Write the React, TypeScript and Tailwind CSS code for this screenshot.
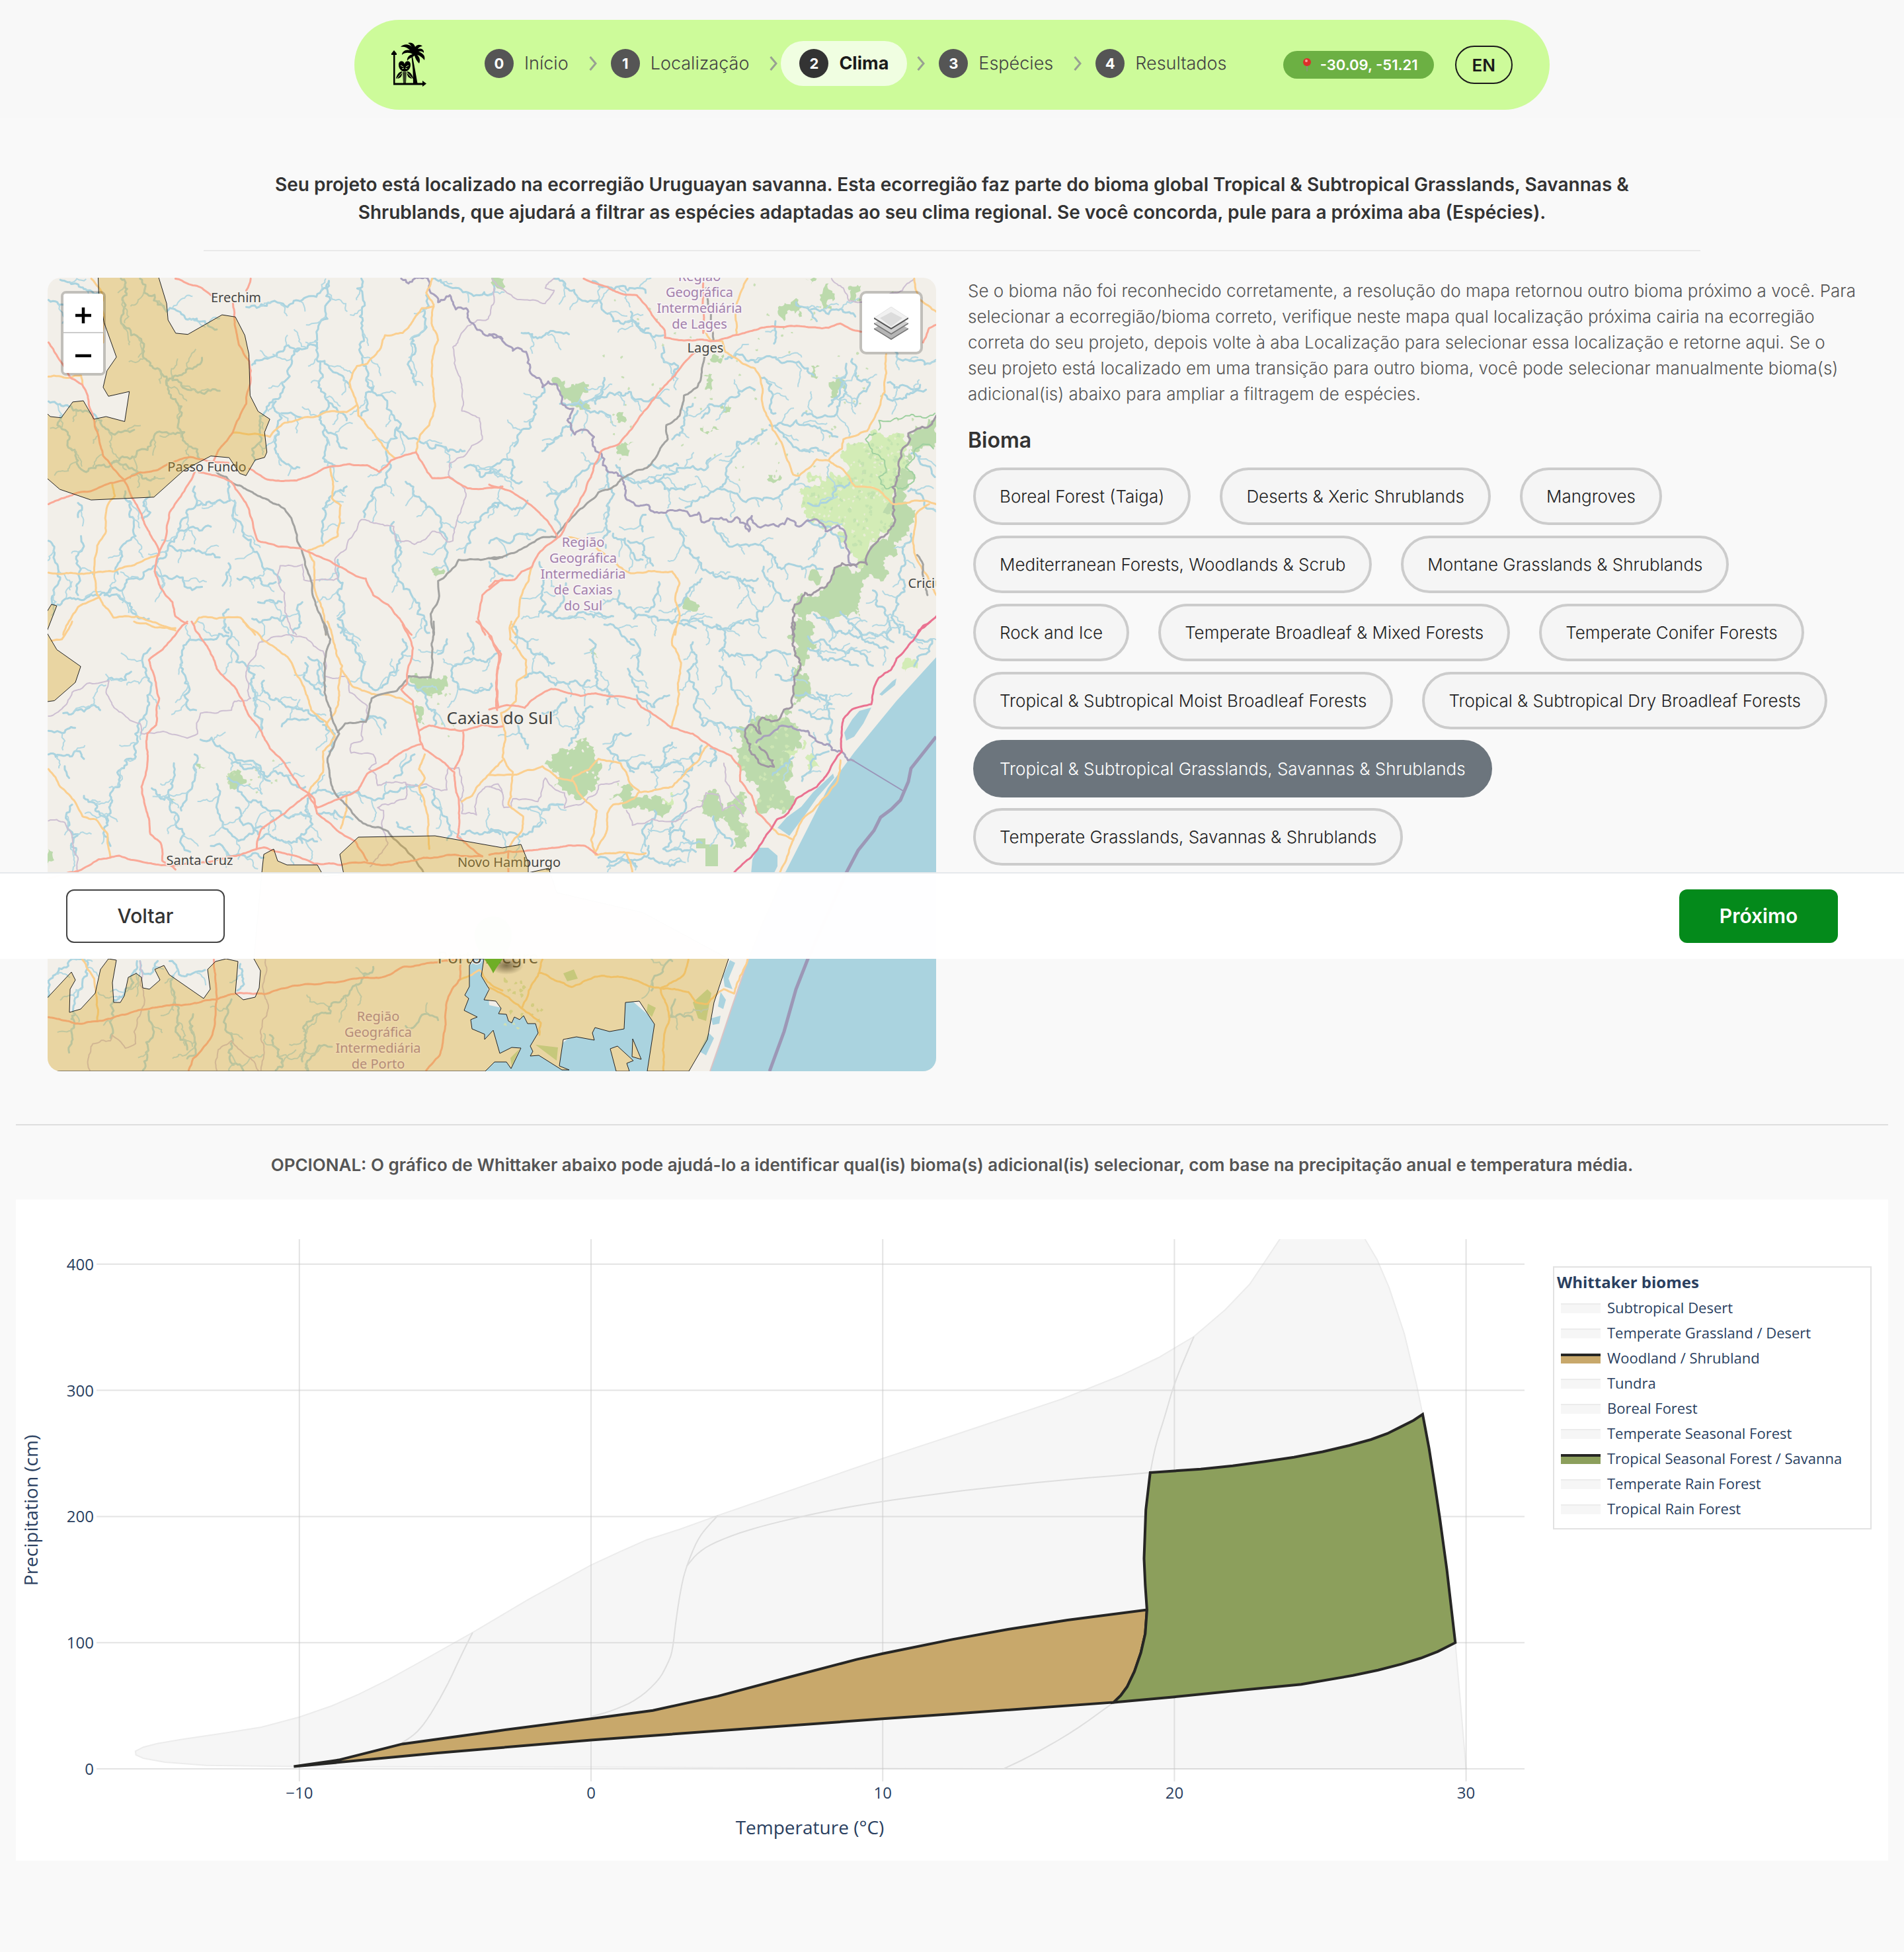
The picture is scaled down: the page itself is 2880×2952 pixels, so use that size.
import type { ReactNode } from 'react';

const steps = ['Início', 'Localização', 'Clima', 'Espécies', 'Resultados'];
const currentStep = 2;

const biomes = [
  'Boreal Forest (Taiga)',
  'Deserts & Xeric Shrublands',
  'Mangroves',
  'Mediterranean Forests, Woodlands & Scrub',
  'Montane Grasslands & Shrublands',
  'Rock and Ice',
  'Temperate Broadleaf & Mixed Forests',
  'Temperate Conifer Forests',
  'Tropical & Subtropical Moist Broadleaf Forests',
  'Tropical & Subtropical Dry Broadleaf Forests',
  'Tropical & Subtropical Grasslands, Savannas & Shrublands',
  'Temperate Grasslands, Savannas & Shrublands',
];
const selectedBiome = 'Tropical & Subtropical Grasslands, Savannas & Shrublands';

/* ---------- map ---------- */

type Point = [number, number];

// Each map tile has its own grid; lines are stored in tile units.
const tiles = {
  nw: { ox: -12, oy: -20, sx: 2.24, sy: 2.8 },
  ne: { ox: 668, oy: -20, sx: 2.24, sy: 2.8 },
  sw: { ox: -12, oy: 520, sx: 2.24, sy: 2.24 },
  se: { ox: 668, oy: 520, sx: 2.24, sy: 2.24 },
};
type Tile = keyof typeof tiles;

function toPoints(tile: Tile, data: string): Point[] {
  const { ox, oy, sx, sy } = tiles[tile];
  return data.split(' ').map((pair) => {
    const [x, y] = pair.split(',').map(Number);
    return [x / sx + ox, y / sy + oy];
  });
}

function seeded(seed: number) {
  let s = seed;
  return () => {
    s = (s * 16807) % 2147483647;
    return s / 2147483647 - 0.5;
  };
}

// Midpoint displacement, so that rivers and borders meander.
function roughen(points: Point[], amount: number, seed: number): Point[] {
  const rand = seeded(seed * 7919 + 13);
  let out = points;
  for (let pass = 0; pass < 5; pass++) {
    const next: Point[] = [out[0]];
    for (let i = 1; i < out.length; i++) {
      const [ax, ay] = out[i - 1];
      const [bx, by] = out[i];
      const len = Math.hypot(bx - ax, by - ay);
      if (len > 5) {
        const d = rand() * Math.min(len, 34) * amount;
        next.push([(ax + bx) / 2 - ((by - ay) / len) * d, (ay + by) / 2 + ((bx - ax) / len) * d]);
      }
      next.push([bx, by]);
    }
    out = next;
  }
  return out;
}

function toPath(points: Point[]) {
  return 'M' + points.map(([x, y]) => `${x.toFixed(1)} ${y.toFixed(1)}`).join('L');
}

function branches(points: Point[], seed: number) {
  const rand = seeded(seed * 104729 + 7);
  const out: string[] = [];
  for (let i = 5; i < points.length - 3; i += 10) {
    const [x, y] = points[i];
    const [px, py] = points[i - 4];
    const side = rand() > 0 ? 1 : -1;
    const angle = Math.atan2(y - py, x - px) + side * (0.8 + rand() * 0.7);
    const len = 14 + (rand() + 0.5) * 24;
    const mid: Point = [x + Math.cos(angle) * len * 0.5, y + Math.sin(angle) * len * 0.5];
    const end: Point = [mid[0] + Math.cos(angle + 0.5) * len * 0.6, mid[1] + Math.sin(angle + 0.5) * len * 0.6];
    out.push(toPath(roughen([[x, y], mid, end], 0.5, seed + i)));
  }
  return out;
}

// Small ragged patches spread over a box.
function speckles(x: number, y: number, w: number, h: number, count: number, size: number, seed: number) {
  const rand = seeded(seed * 3571 + 11);
  for (let i = 0; i < 4; i++) rand();
  let d = '';
  for (let i = 0; i < count; i++) {
    const cx = x + (rand() + 0.5) * w;
    const cy = y + (rand() + 0.5) * h;
    const corners: Point[] = [];
    for (let k = 0; k < 7; k++) {
      const r = size * (0.4 + (rand() + 0.5));
      corners.push([cx + Math.cos(k * 0.9) * r, cy + Math.sin(k * 0.9) * r]);
    }
    d += toPath(corners) + 'Z';
  }
  return d;
}

const rivers: [Tile, string][] = [
  ['nw', '275,60 280,150 275,240 310,300 350,360 370,410 410,450 430,510 460,570 480,640 490,710 505,770 540,820'],
  ['nw', '340,60 355,120 400,170 430,200 480,210 520,230 560,240 600,275'],
  ['nw', '430,510 460,470 510,440 550,395'],
  ['nw', '450,490 500,530 550,545 610,535'],
  ['nw', '490,710 430,710 380,745 330,790 270,830 240,850'],
  ['nw', '70,640 60,680 95,710 105,780 130,830 150,875 200,850 260,830 320,870 390,900'],
  ['nw', '30,580 80,600 130,620 190,640 220,690 260,715 320,700'],
  ['nw', '30,150 60,160 80,170'],
  ['nw', '70,65 120,80 160,110 200,120'],
  ['nw', '700,180 770,175 840,180 890,150 950,120 980,70'],
  ['nw', '980,70 985,150 975,230 940,310 940,370 950,430 945,500 970,570 950,640 965,700 970,770 960,820 1000,850'],
  ['nw', '940,350 880,355 830,350 790,390 720,425'],
  ['nw', '880,360 850,430 820,500 800,570 760,630 745,700 720,780 730,830'],
  ['nw', '800,580 820,650 810,720 800,790 830,840 880,860'],
  ['nw', '1090,60 1095,140 1085,220 1095,300 1090,380 1110,450 1130,520 1170,570 1200,640 1210,700 1280,740 1330,780 1440,790'],
  ['nw', '1130,520 1110,580 1090,640'],
  ['nw', '1210,690 1180,760 1190,850 1170,920 1130,990 1100,1070'],
  ['nw', '1240,920 1270,980 1310,1030 1360,1080 1375,1150 1380,1230 1385,1300'],
  ['nw', '1310,130 1300,220 1285,300 1270,380 1260,450 1275,510'],
  ['nw', '1330,60 1380,90 1420,100 1490,130 1540,90'],
  ['nw', '950,410 990,450 1030,490 1050,520'],
  ['nw', '970,700 1010,740 1040,780'],
  ['nw', '820,630 860,635 890,650'],
  ['nw', '980,585 1010,620 1040,660'],
  ['nw', '525,940 530,1020 500,1070 470,1120 440,1180 430,1230 400,1250 370,1290 310,1330 270,1380 220,1400'],
  ['nw', '640,920 645,1000 590,1010 535,1020'],
  ['nw', '660,1000 665,1080 690,1150 720,1200 745,1240 760,1290 810,1350'],
  ['nw', '470,1120 520,1110 580,1110'],
  ['nw', '440,1190 500,1210 560,1220 610,1240'],
  ['nw', '390,1300 430,1320 490,1350 550,1365'],
  ['nw', '290,960 310,1010 320,1080 325,1150 280,1190 270,1260 265,1310'],
  ['nw', '370,960 375,1050 350,1080'],
  ['nw', '130,1010 130,1070'],
  ['nw', '140,1150 130,1230 135,1300 130,1400'],
  ['nw', '30,1170 50,1230 60,1310 50,1370 50,1440'],
  ['nw', '220,1400 280,1420 310,1470 370,1500'],
  ['nw', '60,1440 110,1415 160,1410 220,1390'],
  ['nw', '640,1265 635,1320 620,1360'],
  ['nw', '670,1330 730,1325 800,1345'],
  ['nw', '960,1180 960,1100 970,1010 1010,960 1040,940'],
  ['nw', '1010,1250 1010,1330 1015,1420 1010,1500 1020,1560'],
  ['nw', '1210,1170 1210,1260 1215,1340 1260,1400 1280,1480 1320,1560'],
  ['nw', '1565,1010 1500,1060 1460,1130 1440,1220'],
  ['nw', '1200,1090 1210,1180 1215,1240'],
  ['nw', '740,1430 780,1420 820,1430'],
  ['nw', '720,1500 770,1505 840,1490'],
  ['nw', '890,1430 880,1500 860,1560'],
  ['nw', '640,1460 625,1510 640,1560'],
  ['nw', '1440,860 1500,900 1560,870'],
  ['ne', '220,60 260,100 300,140 370,150 390,200 420,240 490,240 540,270'],
  ['ne', '110,290 150,310 200,290 270,295'],
  ['ne', '185,520 150,580 150,650 110,700 85,770'],
  ['ne', '300,620 250,690 220,740 180,790'],
  ['ne', '240,590 320,610 370,630 410,640'],
  ['ne', '320,590 380,560 440,540 480,540 540,580 610,600'],
  ['ne', '390,480 385,540 360,590'],
  ['ne', '380,820 330,870 290,910 245,960 230,1050 240,1100'],
  ['ne', '400,870 400,920 415,990 405,1060 410,1130 395,1200'],
  ['ne', '430,850 470,900 520,920 590,930 640,950 675,935'],
  ['ne', '540,850 590,850 640,850'],
  ['ne', '550,900 610,890 670,860 740,850 750,820'],
  ['ne', '900,530 840,560 800,590 740,600 720,650'],
  ['ne', '620,740 650,690 670,640 690,590'],
  ['ne', '590,350 610,420 640,430 620,480'],
  ['ne', '800,400 870,405 930,395 1010,410 1080,440 1100,470'],
  ['ne', '920,480 960,560 950,610 970,630'],
  ['ne', '1210,420 1190,490 1200,560 1180,620 1110,650 1060,640'],
  ['ne', '1230,400 1240,470 1290,500 1250,560 1240,600'],
  ['ne', '1150,600 1180,560 1200,500'],
  ['ne', '950,680 1010,680 1070,680 1120,690 1180,730'],
  ['ne', '970,690 1010,740 1060,790 1150,800'],
  ['ne', '940,700 900,740 840,750 850,790 810,850 810,900 780,950'],
  ['ne', '780,950 840,970 910,990 970,990 1010,950 1050,900'],
  ['ne', '780,950 740,980 690,1000 665,1030'],
  ['ne', '600,1060 640,1120 660,1190 710,1240 740,1300 800,1330 850,1340 910,1330'],
  ['ne', '760,1090 790,1160 850,1190 930,1200 970,1240 990,1290 1060,1290 1130,1290'],
  ['ne', '930,1280 950,1340 980,1390 1020,1420'],
  ['ne', '850,1330 880,1360 900,1390'],
  ['ne', '530,1060 520,1130'],
  ['ne', '420,1140 460,1160 480,1220 520,1250'],
  ['ne', '470,1170 520,1230 555,1275'],
  ['ne', '130,1000 60,1020 0,1030'],
  ['ne', '110,920 75,910 80,840 0,880'],
  ['ne', '0,1180 70,1180 130,1140 190,1130'],
  ['ne', '260,950 220,970 195,980'],
  ['ne', '720,1330 680,1370 650,1440 630,1470'],
  ['ne', '575,1345 560,1410 530,1470'],
  ['ne', '170,1260 190,1330 180,1400 170,1470 250,1500 330,1480 420,1490'],
  ['ne', '260,1350 250,1430 200,1490'],
  ['ne', '440,1380 440,1440 490,1500 560,1490 620,1520 700,1540'],
  ['ne', '0,1260 40,1310 80,1320'],
  ['ne', '1080,1080 1130,1110 1180,1150 1200,1200'],
  ['ne', '1140,1140 1110,1190 1100,1230'],
  ['ne', '1080,1010 1150,1000 1170,940 1230,920'],
  ['ne', '1340,550 1400,570 1440,540 1480,530'],
  ['ne', '1350,500 1400,510 1460,510'],
  ['ne', '1330,340 1380,390 1440,410 1510,410'],
  ['ne', '1430,800 1470,850 1510,900'],
  ['ne', '1420,960 1460,970 1510,1040'],
  ['ne', '1430,1140 1400,1200 1410,1260 1390,1320 1390,1400 1370,1470 1390,1560'],
  ['ne', '1300,1380 1310,1440 1350,1490 1350,1560'],
  ['ne', '1100,1480 1150,1520 1180,1560'],
  ['ne', '1190,1470 1220,1520 1260,1560'],
  ['ne', '1090,190 1150,210 1240,220'],
  ['ne', '1040,160 1090,200 1110,240'],
  ['ne', '970,240 970,300 965,335'],
  ['ne', '350,70 420,110 470,110 530,120'],
  ['ne', '480,200 500,260 530,290 590,300'],
  ['ne', '650,1510 700,1500 740,1530 800,1540 860,1520 910,1510 930,1450'],
  ['sw', '640,20 660,100 700,150 720,220 730,300 750,370'],
  ['sw', '640,50 580,60 500,70 480,130 495,190 490,250 530,300'],
  ['sw', '375,90 360,160 365,250 350,330 330,400 290,470 270,560 240,640 230,690 240,760'],
  ['sw', '310,170 260,195 230,200'],
  ['sw', '545,400 610,420 660,460 730,480 780,520 850,545 900,560'],
  ['sw', '650,480 700,500 780,540'],
  ['sw', '640,530 690,590 750,610 810,640 860,660 910,660'],
  ['sw', '600,550 600,620 620,690 660,730 720,720 760,700'],
  ['sw', '665,630 690,690 740,720'],
  ['sw', '455,480 450,560 435,600 470,660 490,720 510,780'],
  ['sw', '525,450 530,510 500,580 480,640'],
  ['sw', '380,565 410,600 450,610'],
  ['sw', '85,490 100,530'],
  ['sw', '30,370 70,375 120,360'],
  ['sw', '30,450 80,455 150,465'],
  ['sw', '150,590 190,620 230,680'],
  ['sw', '80,310 130,300 205,300'],
  ['sw', '110,620 100,680 130,720 120,790'],
  ['sw', '760,200 800,260 850,290 910,300 960,340'],
  ['sw', '900,140 930,220 960,250'],
  ['sw', '910,120 950,160 970,220'],
  ['sw', '820,355 870,330 910,330'],
  ['sw', '1010,10 1040,60 1080,110 1090,180 1130,230 1180,200 1220,140 1230,60'],
  ['sw', '1560,100 1480,130 1410,150 1400,200 1440,230 1530,210'],
  ['sw', '1450,40 1470,110'],
  ['sw', '1380,60 1350,110'],
  ['sw', '1240,200 1300,240 1340,300 1340,350'],
  ['sw', '910,590 960,570 1010,590 1100,590 1180,580 1240,560 1310,560'],
  ['sw', '920,590 900,640 910,700 890,750'],
  ['sw', '940,650 1000,640 1060,670'],
  ['sw', '960,350 1000,380 980,440'],
  ['sw', '1090,330 1130,320 1170,360'],
  ['sw', '1200,530 1240,480 1270,450'],
  ['sw', '1330,570 1360,640 1390,690 1380,740'],
  ['sw', '1210,680 1255,695'],
  ['sw', '1560,720 1500,720 1430,720'],
  ['sw', '580,760 640,790 700,800 760,800'],
  ['sw', '740,740 820,740 880,730 940,745'],
  ['sw', '30,1270 60,1190 100,1150 160,1150 160,1200 130,1260 120,1330 110,1400 100,1460'],
  ['sw', '330,1150 310,1200 270,1270 250,1340 240,1410'],
  ['sw', '340,1150 340,1180 380,1190 400,1150'],
  ['sw', '440,1150 480,1200 560,1180'],
  ['sw', '680,1160 690,1210 670,1250'],
  ['sw', '370,1320 385,1400 360,1460 350,1520'],
  ['sw', '450,1200 460,1300 470,1400 500,1450'],
  ['sw', '520,1330 525,1410 500,1480'],
  ['sw', '650,1280 630,1340 650,1400 640,1460 690,1520'],
  ['sw', '1130,1170 1080,1230 1010,1290 940,1330 900,1400 890,1490'],
  ['sw', '1350,1350 1290,1340 1240,1370'],
  ['sw', '990,1440 940,1450 910,1520'],
  ['sw', '800,1520 810,1450 780,1400'],
  ['se', '80,10 130,70 180,110 220,140'],
  ['se', '480,60 500,120 520,180'],
  ['se', '340,60 350,120 360,170 400,230 400,280'],
  ['se', '120,190 200,190 260,210 340,200'],
  ['se', '390,10 450,50 490,80'],
  ['se', '770,10 800,50 780,100 850,110 910,130 980,100 1020,110'],
  ['se', '690,70 690,150 700,230 700,300 720,350 800,360 870,360'],
  ['se', '780,150 820,220 860,280 880,340'],
  ['se', '500,250 560,290 610,250'],
  ['se', '470,160 490,210 540,250'],
  ['se', '260,260 230,300 180,310'],
  ['se', '290,290 320,330 350,290'],
  ['se', '320,330 300,380 270,420'],
  ['se', '110,330 110,390 130,430'],
  ['se', '480,380 420,400 400,430 470,470 490,510'],
  ['se', '470,480 540,480 600,490 650,480'],
  ['se', '550,510 590,440 620,410'],
  ['se', '720,420 680,460 650,530'],
  ['se', '750,430 770,460 750,490'],
  ['se', '660,540 670,590 650,650 610,710 590,770'],
  ['se', '610,720 660,710 720,750'],
  ['se', '560,640 530,690 530,760'],
  ['se', '100,630 180,640 250,620'],
  ['se', '0,715 80,715 130,720 180,680'],
  ['se', '370,800 430,810 520,800 540,760'],
  ['se', '400,830 460,810 500,830'],
  ['se', '540,800 600,820 650,810'],
  ['se', '590,770 640,770 700,780'],
  ['se', '760,660 790,720 820,760'],
  ['se', '1080,50 1140,70 1200,100 1260,110 1300,150'],
  ['se', '1150,10 1220,30 1300,70 1350,90'],
  ['se', '1230,10 1300,40 1370,70'],
  ['se', '1390,10 1440,50 1500,60'],
  ['se', '1080,90 1130,130 1200,130 1250,150'],
  ['se', '1040,250 1100,260 1150,300 1160,370 1150,420'],
  ['se', '1110,240 1160,280'],
  ['se', '1050,300 1110,330 1150,330'],
  ['se', '970,180 1000,200 1030,160'],
  ['se', '1030,460 1000,490 960,520'],
  ['se', '1060,540 1090,500 1110,450 1150,440'],
  ['se', '1500,60 1480,110 1440,150'],
  ['se', '620,1150 560,1200 550,1250'],
  ['se', '630,1280 610,1340 690,1350'],
];

const trunkRoads: [Tile, string][] = [
  ['nw', '460,60 500,80 550,100 580,130'],
  ['nw', '715,60 700,110'],
  ['nw', '655,165 660,230 675,340 710,410 715,490 700,590 655,710 610,780 590,830'],
  ['nw', '30,330 60,390 105,480 145,510 180,640 200,730 215,810 285,910 320,1000 350,1080 405,1220'],
  ['nw', '30,1015 120,970 200,945 285,915 340,880 400,870 440,840 510,815 590,835 640,840'],
  ['nw', '525,880 490,960 440,1050 430,1140 405,1220 390,1300 410,1370 450,1430 460,1490 500,1520'],
  ['nw', '540,880 600,895 650,920 710,1040 730,1140 740,1170 810,1195 890,1205 1000,1270 1060,1310 1105,1330 1130,1400 1180,1440 1220,1500 1260,1568'],
  ['nw', '710,865 770,910 870,915 960,865 1050,845 1110,850 1150,878 1190,830 1275,795 1330,905 1385,900 1450,948 1568,940'],
  ['nw', '1568,1330 1500,1400 1485,1500 1510,1568'],
  ['ne', '0,932 60,955 130,1010 200,1090 230,1150'],
  ['ne', '320,60 400,95 440,120 500,130 540,190 595,280 595,310 660,322 750,325 850,295 960,262 1060,262 1150,268 1190,250 1260,285'],
  ['ne', '1470,330 1490,270 1515,255'],
  ['ne', '725,80 725,290'],
  ['ne', '700,370 640,450 540,600 480,700 440,760 380,790 345,900 300,1020 240,1150 170,1220 145,1280 110,1300 85,1335 20,1340 0,1365'],
  ['sw', '500,0 470,30 430,80 370,130 390,190 405,260 395,350 365,380 365,480 345,560 365,650 375,720 410,750 415,810 460,840'],
  ['sw', '515,0 550,60 580,110 600,160 660,220 690,270 710,320 750,370 780,430 830,480 880,560 930,600 940,650 1000,700 1070,745 1110,810'],
  ['sw', '30,870 130,845 200,805 270,793 350,815 420,825 530,820 650,795 760,765 850,790 930,820 1020,825 1100,815 1190,825 1300,800 1400,790 1500,795'],
  ['sw', '735,770 750,705 830,650 910,585 940,630 1000,605 1080,570 1110,515 1180,480 1230,440 1295,415'],
  ['sw', '1230,10 1265,90 1250,150 1245,210 1225,230 1265,270 1285,380 1300,430 1360,470 1405,510 1420,600 1415,730 1500,795'],
  ['sw', '1285,370 1320,352 1430,370 1500,350 1568,355'],
  ['sw', '1435,375 1430,450 1405,500'],
  ['sw', '1480,0 1530,50 1555,110 1550,300'],
  ['sw', '30,1340 120,1362 240,1345 350,1315 480,1300 600,1280 650,1262 760,1262 900,1228 1060,1210 1160,1205 1230,1170 1340,1155 1430,1145'],
  ['sw', '590,1145 600,1280 585,1400 520,1480 505,1520'],
  ['sw', '1425,1145 1425,1210 1385,1270 1375,1350 1355,1470 1310,1520'],
  ['se', '0,50 40,110 25,180 30,290'],
  ['se', '0,298 60,283 120,292 160,255 210,228 310,252 360,243 500,265 515,290 620,360 690,380 740,415 820,455 850,490 850,540 890,590 910,650 955,695'],
  ['se', '0,790 65,778 180,770 270,758 325,760 365,788'],
  ['se', '65,780 65,850'],
];

const motorways: [Tile, string][] = [
  ['ne', '1515,1490 1470,1530 1450,1568'],
  ['se', '1495,0 1455,30 1410,95 1380,125 1360,165 1320,190 1305,220 1295,280 1230,297 1200,330 1195,440 1150,510 1110,560 1040,600 1000,660 975,670 935,730 910,770 860,820 830,850'],
];

const primaryRoads: [Tile, string][] = [
  ['nw', '175,60 215,140 215,330'],
  ['nw', '30,475 100,480 140,470 145,510'],
  ['nw', '1330,60 1310,120 1335,170 1330,260 1350,320 1330,430 1340,600 1320,680 1290,720 1275,795'],
  ['nw', '1335,178 1295,185 1230,290 1170,300 1140,380 1110,420 1075,430 1050,500 1075,590 1080,640 1140,730 1205,820'],
  ['nw', '1075,595 1040,625 960,630 890,650 830,670 780,730 740,718 655,712'],
  ['nw', '985,865 995,940 990,990 1020,1020 1010,1150 960,1190 910,1210 930,1260 930,1350 950,1430 970,1568'],
  ['nw', '30,1305 150,1310 250,1300 330,1265 405,1230'],
  ['nw', '245,925 255,980 230,1020 225,1130 195,1190 185,1300 190,1380 250,1495 330,1490 400,1520 460,1540'],
  ['nw', '200,1410 130,1450 90,1530 80,1568'],
  ['nw', '525,1520 540,1495 600,1500 680,1495 730,1568'],
  ['ne', '875,60 840,160 838,295'],
  ['ne', '730,280 750,320 790,325 800,370 850,410 900,440 920,490 925,550 940,640 960,700 1000,790 1030,890 1050,895 1110,825 1150,830 1195,780 1200,740 1280,705 1320,610 1340,540 1345,380'],
  ['ne', '1150,830 1190,860 1240,940 1320,955 1370,1015 1440,1000 1515,1015'],
  ['ne', '1490,1015 1445,1060 1440,1220 1480,1310 1515,1400'],
  ['ne', '1440,60 1460,150 1515,200'],
  ['ne', '270,1155 330,1160 370,1210 440,1280 480,1308 560,1298 620,1300 645,1350 630,1420 645,1480 630,1568'],
  ['ne', '145,1280 110,1400 100,1490 75,1540 90,1568'],
  ['sw', '30,500 70,560 110,600 145,660 190,670 230,720 240,800'],
  ['sw', '320,0 400,20 460,30'],
  ['sw', '40,65 75,60 110,0'],
  ['sw', '690,0 760,65 840,120 870,180 920,300 970,340 1000,390 960,440 960,510 920,560 910,585'],
  ['sw', '975,0 1000,80 1025,150 1015,250 1000,310 970,350'],
  ['sw', '1020,160 1060,220 1125,245 1190,250 1260,280'],
  ['sw', '1305,450 1285,500 1305,530 1285,560 1310,640 1320,770'],
  ['sw', '1568,470 1500,540 1465,590 1430,610'],
  ['sw', '1040,590 1040,640 1020,700'],
  ['sw', '145,1145 185,1210 195,1350'],
  ['sw', '1420,1215 1490,1180 1530,1230 1568,1250'],
  ['se', '75,0 70,60 125,130 125,180 95,200 90,270 40,310 55,400 45,460 80,510 65,620 115,660 110,710 70,760'],
  ['se', '640,0 620,80 650,140 640,280 615,360'],
  ['se', '740,420 710,470 660,520 620,560 510,578 475,545 445,480 370,465 340,500 285,525 280,540 230,530 180,490 80,520 0,520'],
  ['se', '285,540 320,600 365,640 345,740 360,790 470,783 530,785'],
  ['se', '505,580 490,600 420,620 400,650 400,700 360,780'],
  ['se', '465,785 485,850'],
  ['se', '1190,470 1180,540 1130,600 1070,660 1030,740 985,850'],
  ['se', '960,700 980,720 1030,740'],
  ['se', '875,1145 850,1200 830,1260 795,1245 740,1295 700,1290 675,1255 580,1242 480,1210 390,1200 330,1215 280,1238 170,1190'],
  ['se', '675,1145 660,1195 580,1242 610,1350 590,1430 590,1520'],
  ['se', '180,1145 165,1200 130,1270 110,1310'],
  ['se', '0,1240 60,1270 110,1310 175,1360 170,1400'],
];

const railways: [Tile, string][] = [
  ['nw', '600,880 660,930 740,980 830,1035 865,1120 890,1220 915,1320 925,1400 950,1480 970,1568'],
  ['nw', '1568,1240 1420,1250 1390,1300 1350,1340 1345,1440 1325,1480 1335,1568'],
  ['ne', '735,100 760,320'],
  ['ne', '730,390 705,520 660,555 645,640 600,680 605,740 545,850 445,910 430,935 370,965 290,1060 225,1155 170,1160 100,1210 30,1245 0,1245'],
  ['ne', '1450,1230 1470,1270 1485,1400'],
  ['sw', '960,0 985,60 970,110 965,240 1000,350 1015,380 975,470 1000,580 1060,650 1110,690 1180,710 1240,770 1280,820 1300,850'],
  ['sw', '1335,0 1330,100 1325,190 1250,185 1210,235 1125,260 1105,340 1035,345 1010,375'],
];

const stateBorder: [Tile, string][] = [
  ['nw', '1225,60 1250,80 1270,60 1315,60 1325,120 1350,160 1390,130 1410,190 1445,185 1460,245 1510,300 1568,315'],
  ['ne', '0,295 50,330 80,365 125,370 140,460 180,520 200,495 240,540 245,580 285,610 265,660 290,720 320,700 355,730 360,790 380,800 385,850 430,880 455,930 495,1020 520,1020 560,1050 620,1040 680,1065 710,1050 720,1090 750,1075 820,1090 840,1070 870,1100 880,1130 890,1065 910,1110 980,1110 1010,1075 1050,1110 1110,1080 1140,1130 1180,1105 1210,1150 1210,1200 1245,1280'],
  ['se', '905,410 950,385 1025,355 1080,370 1120,410 1160,435 1200,445 1215,470 1235,472'],
];

const escarpment: [Tile, string][] = [
  ['ne', '1515,640 1485,690 1420,715 1395,800 1380,900 1370,990 1360,1120 1310,1180 1280,1270 1170,1285 1135,1370 1090,1400 1070,1390 1035,1440 1028,1568'],
  ['se', '1030,0 1035,100 1055,150 1030,230 1025,290 975,335 925,325 920,380 880,350 870,395 885,440 940,490 965,492 915,425'],
];

const regionBorders: [Tile, string][] = [
  ['nw', '1540,100 1540,160 1520,230 1450,260 1400,350 1410,440 1430,520 1430,620 1490,650 1500,740 1440,810 1390,840 1385,890 1440,950 1430,1030 1400,1170 1380,1175 1360,1140 1330,1130 1310,1160 1270,1185 1210,1170 1200,1110 1140,1095 1090,1080 1060,1150 1000,1250 1010,1330 895,1335 890,1270 815,1275 805,1320 830,1390 840,1500 870,1568'],
  ['ne', '1160,60 1200,100 1220,155 1300,160 1350,130 1400,110 1440,60'],
  ['ne', '10,60 60,120 120,150 190,165 220,110 190,100 220,60'],
  ['sw', '30,320 80,290 110,240 160,210 235,200 225,240 280,310 340,345 345,380 430,375 500,395 535,380 545,310 650,300 660,270 715,260 705,150 745,70 810,50 880,50 960,100 965,180'],
  ['sw', '965,185 1040,185 1050,240 1110,285 1095,400 1055,415 1055,445 1130,450 1140,480 1115,500 1140,520 1145,555 1240,545 1240,600 1160,620 1145,630 1165,640 1165,710 1180,750 1120,830'],
  ['sw', '1240,550 1310,550 1380,570 1385,495 1420,495 1435,560 1430,650 1480,655 1480,600 1510,560 1568,580'],
  ['sw', '30,675 85,680 110,730 130,800 130,848'],
  ['sw', '340,1150 340,1230 355,1290 330,1350 325,1430 290,1445 245,1400 240,1420 180,1430 170,1520'],
  ['sw', '765,1145 760,1220 775,1310 755,1350 760,1440 750,1520'],
  ['sw', '600,1520 605,1450 650,1420 700,1470 740,1520'],
  ['se', '0,560 30,550 50,630 75,630 80,600 165,610 190,530 225,570 255,580 255,632 310,620 365,580 370,555 440,540'],
  ['se', '465,640 485,690 550,670 650,668 660,650 720,625 735,580 780,590 790,640 830,620 860,660'],
  ['se', '795,480 800,540 830,590 860,620'],
];

const parkBorders: [Tile, string][] = [
  ['ne', '1320,700 1320,660 1380,650 1430,635 1480,650 1510,630'],
  ['ne', '1310,715 1275,740 1300,800 1340,830 1345,880 1320,900 1345,950 1400,950 1440,910 1410,860 1440,790 1470,760 1505,780'],
];

const forests: [Tile, string][] = [
  ['ne', '1515,640 1480,690 1420,715 1395,800 1385,900 1370,990 1360,1120 1310,1180 1280,1270 1170,1285 1135,1370 1090,1400 1060,1390 1035,1440 1028,1568 1090,1568 1090,1480 1160,1500 1240,1440 1260,1500 1260,1370 1340,1330 1370,1240 1420,1150 1430,1030 1400,960 1440,890 1410,830 1470,770 1515,740'],
  ['se', '1030,0 1035,100 1055,150 1030,230 1025,290 975,335 925,325 880,350 835,370 860,410 820,430 840,480 870,540 910,600 930,650 990,650 1020,590 1000,540 1030,490 990,440 1060,420 1060,390 1020,340 1060,260 1080,200 1070,140 1110,90 1090,0'],
  ['se', '210,450 290,405 355,425 360,470 375,530 360,570 320,595 270,590 220,560 215,510'],
  ['se', '405,600 430,545 475,550 480,590'],
  ['se', '450,625 500,595 570,590 615,620 600,650 540,645 480,635'],
  ['se', '720,650 740,575 780,590 790,640 830,600 870,580 870,640 850,680 880,730 870,765 825,770 810,690 800,660 770,680 740,660'],
  ['ne', '210,490 240,485 320,495 310,560 345,610 290,600 245,560 240,520'],
  ['ne', '430,640 455,625 460,670 435,670'],
  ['ne', '430,795 460,750 490,750 450,810'],
  ['ne', '980,190 1050,170 1060,220 1000,240 985,220'],
  ['ne', '1120,150 1150,80 1160,190 1130,190'],
  ['ne', '1215,100 1260,90 1260,150 1220,150'],
  ['ne', '1070,60 1110,60 1090,85'],
  ['ne', '1150,510 1190,480 1180,570 1155,560'],
  ['ne', '1090,430 1120,430 1115,475 1090,465'],
  ['ne', '725,470 755,465 755,560 730,530'],
  ['ne', '780,600 810,590 815,625 790,630'],
  ['ne', '725,680 780,700 740,720'],
  ['ne', '755,385 795,380 785,420 760,415'],
  ['ne', '945,890 985,890 985,915 955,920'],
  ['ne', '10,70 50,60 50,85 20,90'],
  ['ne', '1085,1310 1130,1320 1110,1360 1090,1340'],
  ['ne', '655,1430 700,1430 690,1470 665,1460'],
  ['nw', '1325,1290 1370,1310 1340,1330'],
  ['sw', '640,530 670,500 690,550 660,570'],
  ['sw', '1240,190 1320,180 1370,230 1350,250 1310,250 1270,210'],
  ['sw', '1270,290 1300,290 1305,350 1280,340'],
  ['sw', '525,480 565,488 540,500'],
  ['sw', '440,600 465,600 450,620'],
  ['se', '335,90 360,90 370,125 345,110'],
  ['sw', '30,770 45,780 30,830'],
];

const meadows: [Tile, string][] = [
  ['ne', '1210,760 1300,700 1395,715 1385,900 1370,990 1360,1120 1310,1180 1260,1290 1220,1220 1200,1110 1120,1090 1060,1010 1080,940 1140,920 1200,900 1210,840'],
  ['ne', '1080,880 1120,880 1130,920 1090,920'],
  ['se', '1000,430 1060,400 1070,430 1020,460'],
  ['se', '560,590 625,570 625,610 580,610'],
  ['se', '1400,150 1450,135 1450,160 1410,170'],
  ['se', '1070,460 1110,460 1090,510'],
];

const ecoregions: [Tile, string][] = [
  ['nw', '198,50 200,120 218,245 260,392 228,450 215,520 233,558 304,538 288,665 225,644 184,655 148,577 112,582 73,649 36,644 20,625 20,900 68,952 174,997 387,985 490,870 580,811 642,818 678,885 699,894 730,828 762,817 770,795 762,710 780,655 740,622 713,555 709,380 695,300 663,222 618,213 502,296 461,291 435,235 430,165 402,50'],
  ['nw', '20,1480 40,1439 58,1445 20,1568'],
  ['sw', '20,30 58,95 139,152 121,206 50,268 20,272'],
];

const savanna =
  'M-6 1095L36 1050L42 1062L34 1076L33 1111L50 1106L72 1082L80 1046L92 1030L104 1032L98 1066L100 1096L110 1096L116 1086L122 1058L134 1052L142 1058L144 1074L154 1076L170 1062L162 1046L176 1040L184 1054L236 1090L246 1076L242 1046L254 1034L270 1030L288 1034L284 1082L296 1092L314 1088L320 1074L322 1048L312 1030L324 900L327 872L342 864L348 882L362 888L408 888L418 906L448 902L442 872L470 846L586 844L688 862L716 857L727 884L727 900L758 893L770 930L900 960L1030 1030L1008 1096L998 1152L970 1200L907 1200L918 1129L895 1094L874 1096L872 1136L850 1140L828 1134L824 1142L827 1153L800 1148L780 1152L774 1192L789 1198L778 1198L743 1176L730 1177L734 1170L730 1162L742 1142L738 1128L726 1128L720 1116L714 1122L706 1118L702 1127L697 1124L694 1114L682 1113L686 1105L678 1094L660 1092L668 1076L656 1056L660 1030L644 1030L638 1040L638 1072L631 1085L637 1090L630 1108L650 1118L640 1122L642 1136L661 1144L661 1152L674 1138L684 1173L702 1164L716 1165L701 1196L694 1186L676 1186L662 1200L-6 1200Z';
const islands = 'M851 1166L862 1162L886 1184L876 1188L880 1200H860ZM885 1151L898 1182L884 1178Z';

function Lines({ data, className, rough, offset = 0 }: { data: [Tile, string][]; className: string; rough: number; offset?: number }) {
  return (
    <g className={className} fill="none" strokeLinejoin="round" strokeLinecap="round">
      {data.map(([tile, pts], i) => (
        <path key={i} d={toPath(roughen(toPoints(tile, pts), rough, i + offset + 1))} />
      ))}
    </g>
  );
}

function areaPaths(data: [Tile, string][], rough: number) {
  return data.map(([tile, pts], i) => {
    const points = toPoints(tile, pts);
    return <path key={i} d={toPath(rough ? roughen([...points, points[0]], rough, i + 400) : points) + 'Z'} />;
  });
}

function RegionLabel({ x, y, lines }: { x: number; y: number; lines: string[] }) {
  return (
    <text textAnchor="middle" className="fill-[#a27fab] stroke-[#f7f2f4] stroke-[4px] font-['Noto_Sans'] text-[20px] [paint-order:stroke]">
      {lines.map((line, i) => (
        <tspan key={line} x={x} y={y + i * 24}>
          {line}
        </tspan>
      ))}
    </text>
  );
}

function MapLabel({ x, y, big, children }: { x: number; y: number; big?: boolean; children: ReactNode }) {
  return (
    <text
      x={x}
      y={y}
      textAnchor="middle"
      className={`fill-[#444442] stroke-[#f5f2ec] stroke-[3px] font-['Noto_Sans'] [paint-order:stroke] ${big ? 'text-[26px]' : 'text-[20px]'}`}
    >
      {children}
    </text>
  );
}

function EcoregionMap() {
  return (
    <svg viewBox="0 0 1344 1200" preserveAspectRatio="xMidYMid slice" className="h-full w-full" role="img" aria-label="Mapa de ecorregiões">
      <defs>
        <clipPath id="meadow-area">{areaPaths(meadows, 0.9)}</clipPath>
        <clipPath id="forest-area">{areaPaths(forests, 0.9)}</clipPath>
        <radialGradient id="pin-shadow">
          <stop offset="0" stopColor="#3a2c10" stopOpacity="0.6" />
          <stop offset="1" stopColor="#3a2c10" stopOpacity="0" />
        </radialGradient>
      </defs>
      <rect width="1344" height="1200" fill="#f2efe9" />

      <g clipPath="url(#meadow-area)">
        <rect width="1344" height="1200" fill="#d3ecb6" />
        <path d={speckles(1130, 220, 200, 240, 200, 2, 1)} fill="#e8eed4" />
        <path d={speckles(1130, 220, 200, 240, 260, 3, 2)} fill="#c4e3b0" />
      </g>
      <g clipPath="url(#forest-area)">
        <rect width="1344" height="1200" fill="#bcdaac" />
        <path d={speckles(740, 620, 220, 260, 130, 2, 3)} fill="#f2efe9" />
        <path d={speckles(1030, 640, 130, 200, 120, 3, 4)} fill="#cde6b4" />
      </g>
      <path d="M981 848H995V863H981ZM995 857H1014V890H995Z" fill="#bcdaac" />
      <path d={speckles(840, 10, 480, 300, 90, 2, 5) + speckles(560, 600, 60, 100, 14, 2, 6) + speckles(270, 730, 80, 50, 16, 2, 7)} fill="#c8dfb6" />

      {/* lagoon, then the land that rises out of it */}
      <path d="M636 1030H662L668 1100L760 1120L776 1160L800 1140L830 1120L880 1090L926 1130L912 1200H655L620 1130Z" fill="#aad3df" />
      <path d={savanna + islands} fill="#f2efe9" />
      <path
        d="M976 1096L998 1076L1004 1082L996 1124L984 1120ZM780 1052L796 1046L802 1060L786 1064ZM908 1098L920 1104L914 1118L906 1110ZM700 1180L714 1166L702 1192ZM738 1160L772 1164L770 1184Z"
        fill="#bcdaac"
      />
      <path d={speckles(690, 1050, 60, 90, 20, 3, 8)} fill="#cfe0b4" />

      {/* river network */}
      <Lines data={rivers} className="stroke-[#aad3df] stroke-[3px]" rough={0.6} />
      <g className="stroke-[#b3d8e2] stroke-2" fill="none">
        {rivers.map(([tile, pts], i) =>
          branches(roughen(toPoints(tile, pts), 0.6, i + 1), i + 1).map((d, k) => <path key={`${i}-${k}`} d={d} />),
        )}
      </g>

      {/* sea and coastal lakes */}
      <path d="M1344 574L1284 640L1220 718L1180 772L1148 836L1116 899L1082 975L1058 1036L1036 1100L1016 1160L1002 1200H1344Z" fill="#aad3df" />
      <path d="M1116 899L1082 975L1058 1036L1036 1100L1016 1160L1002 1200" fill="none" stroke="#dcc3c4" strokeWidth="2" />
      <path
        d="M1217 668L1228 655L1246 650L1234 674L1220 694L1208 700L1205 688ZM1278 610L1284 606L1282 616L1262 632L1258 630ZM1104 832L1118 816L1140 800L1158 778L1188 750L1190 756L1164 786L1146 812L1122 844L1108 834ZM1066 880L1074 862L1090 862L1104 874L1104 890L1098 902H1064ZM1040 1036L1030 1060L1036 1076L1024 1072L1022 1056L1032 1032ZM1018 1080L1026 1092L1022 1106L1014 1102ZM1004 1120L1018 1116L1016 1128L1006 1130ZM1000 1142L1008 1150L996 1176L986 1170Z"
        fill="#aad3df"
      />
      <path d="M1218 730L1294 776" fill="none" stroke="#9a94b8" strokeWidth="2" />
      <path
        d="M1344 694L1306 742L1302 762L1290 790L1276 804L1260 816L1250 836L1226 866L1208 900L1150 1030L1132 1076L1114 1140L1092 1200"
        fill="none"
        stroke="#9c97b6"
        strokeWidth="5"
      />

      <Lines data={regionBorders} className="stroke-[#cdbfd2] stroke-2" rough={0.25} offset={90} />
      <Lines data={parkBorders} className="stroke-[#9fd0a0] stroke-2" rough={0.4} offset={30} />
      <Lines data={stateBorder} className="stroke-[#a8a0bd] stroke-[3px]" rough={0.45} offset={50} />
      <Lines data={escarpment} className="stroke-[#a097a3] stroke-[3px]" rough={0.45} offset={70} />
      <Lines data={primaryRoads} className="stroke-[#fbcf8f] stroke-[3px]" rough={0.16} />
      <Lines data={railways} className="stroke-[#a3a3a1] stroke-[3px]" rough={0.16} />
      <Lines data={trunkRoads} className="stroke-[#faa998] stroke-[3px]" rough={0.12} />
      <Lines data={motorways} className="stroke-[#ea7291] stroke-[3px]" rough={0.12} />

      <MapLabel x={285} y={37}>Erechim</MapLabel>
      <MapLabel x={241} y={293}>Passo Fundo</MapLabel>
      <MapLabel x={995} y={113}>Lages</MapLabel>
      <MapLabel x={1343} y={469}>Criciúma</MapLabel>
      <MapLabel x={684} y={675} big>Caxias do Sul</MapLabel>
      <MapLabel x={230} y={888}>Santa Cruz</MapLabel>
      <MapLabel x={698} y={891}>Novo Hamburgo</MapLabel>
      <MapLabel x={666} y={1037} big>Porto Alegre</MapLabel>
      <RegionLabel x={986} y={5} lines={['Região', 'Geográfica', 'Intermediária', 'de Lages']} />
      <RegionLabel x={810} y={407} lines={['Região', 'Geográfica', 'Intermediária', 'de Caxias', 'do Sul']} />
      <RegionLabel x={500} y={1124} lines={['Região', 'Geográfica', 'Intermediária', 'de Porto']} />

      <g className="fill-[#daa520]/35 stroke-[#222]">
        {areaPaths(ecoregions, 0)}
        <path d={savanna} />
        <path d={islands} />
      </g>

      {/* project marker */}
      <ellipse cx="694" cy="1040" rx="26" ry="14" fill="url(#pin-shadow)" />
      <path d="M674 1052C668 1036 646 1018 646 994a28 28 0 0 1 56 0C702 1018 682 1036 674 1052Z" fill="#6fae26" />
    </svg>
  );
}

function LayersIcon() {
  return (
    <svg viewBox="0 0 52 50" className="h-[50px] w-[52px]">
      <path d="M0 33L26 50L52 33L26 17Z" fill="#b5b5b5" />
      <path d="M0 33L26 49L52 33" fill="none" stroke="#777" strokeWidth="1.5" />
      <path d="M0 25L26 41L52 25L26 9Z" fill="#cfcfcf" />
      <path d="M0 25L26 41L52 25" fill="none" stroke="#777" strokeWidth="1.5" />
      <path d="M0 17L26 33L52 17L26 0Z" fill="#f1f1f1" stroke="#ccc" strokeWidth="0.5" />
      <path d="M9 17L26 30L43 17L26 8Z" fill="#dcdcdc" />
      <path d="M0 17L26 33L52 17" fill="none" stroke="#555" strokeWidth="2" />
    </svg>
  );
}

/* ---------- header ---------- */

function Logo() {
  return (
    <svg viewBox="0 0 60 70" className="h-[70px] w-[60px]" fill="#000">
      <path d="M6 13L10 18V20H7.500V62.500H49V59L55 63.500L49 68V65.500H5V20H2V18Z" />
      <path d="M34 22Q38 43 41.500 63H35Q35 42 32.500 23Z" />
      <path d="M34 19C30 16 22 16 18 20C18 15 24 11 30 13C26 8 20 7 16 8C20 3 29 3 33 8C31 5 29 3 27 2C33 0 37 4 38 8C41 4 46 4 49 7C46 7 43 9 42 11C48 9 52 13 51 17C49 14 45 14 43 15C49 17 54 21 52 28C49 24 45 21 41 20C45 24 46 28 44 33C40 29 38 25 37 21C34 24 30 24 26 29C25 24 29 20 34 19Z" />
      <path d="M22 34C23 28 31 28 31 35C31 41 27 45 22 45.500C17 45 13 41 13 35C13 28 21 28 22 34Z" />
      <path d="M16 36L20 38M28 36L24 38M18 41L21 40M26 41L23 40" stroke="#cdfb9a" strokeWidth="1" />
      <path d="M19 46H25L24 63H20Z" opacity="0.75" />
      <path d="M18 45C13 46 10 50 9 56C16 56 19 52 18 45ZM26 45C31 46 34 50 35 56C28 56 25 52 26 45Z" />
      <path d="M10 56L18 47M34 56L26 47" stroke="#cdfb9a" strokeWidth="1" />
    </svg>
  );
}

function Header() {
  return (
    <header className="flex justify-center bg-[#f8f8f8] px-8 pt-[30px] pb-3">
      <div className="flex h-[136px] w-full max-w-[1808px] items-center rounded-full bg-[#cdfb9a] pr-14 pl-[54px]">
        <Logo />
        <nav className="mb-1 ml-[67px] flex items-center" aria-label="Etapas">
          {steps.map((label, i) => {
            const active = i === currentStep;
            return (
              <div key={label} className="flex items-center">
                {i > 0 && (
                  <svg viewBox="0 0 12 22" className="mr-[5px] ml-[15px] h-[22px] w-3" fill="none" stroke="#98a092" strokeWidth="3">
                    <path d="M1.500 1L10 11L1.500 21" />
                  </svg>
                )}
                <a
                  href={`#${i}`}
                  aria-current={active ? 'step' : undefined}
                  className={`flex h-[68px] items-center gap-4 rounded-[34px] text-[27px] ${
                    active ? 'bg-white/70 px-7 font-bold text-[#1a1a1a]' : 'px-4 font-light text-[#444]'
                  }`}
                >
                  <span
                    className={`flex size-11 items-center justify-center rounded-full text-[22px] font-bold text-white ${
                      active ? 'bg-[#333]' : 'bg-[#555]'
                    }`}
                  >
                    {i}
                  </span>
                  {label}
                </a>
              </div>
            );
          })}
        </nav>
        <div className="ml-auto flex items-center gap-8">
          <span className="flex h-[42px] items-center gap-[14px] rounded-[21px] bg-[#6cb043] pr-6 pl-[30px] text-[22px] font-semibold text-white">
            <svg viewBox="0 0 12 20" className="h-5 w-3">
              <path d="M5 10H7L6.500 20H5.500Z" fill="#8b8f8b" />
              <circle cx="6" cy="6" r="6" fill="#dc2f2a" />
              <circle cx="5" cy="4" r="2" fill="#f9a19b" />
            </svg>
            -30.09, -51.21
          </span>
          <button type="button" className="h-[58px] rounded-full border-2 border-[#1a1a1a] px-6 text-[26px] font-semibold text-[#1a1a1a]">
            EN
          </button>
        </div>
      </div>
    </header>
  );
}

/* ---------- Whittaker chart ---------- */

// [temperature °C, precipitation cm]
const envelope: Point[] = [
  [-10, 1.8], [-13.2, 2.8], [-14.6, 5.3], [-15.35, 8.4], [-15.6, 11], [-15.62, 14], [-15.35, 17.2], [-14.87, 20], [-14, 23.5],
  [-12.54, 28.4], [-11.3, 33], [-10, 41], [-8.9, 49.8], [-7.97, 59], [-6.93, 70.9], [-5.68, 87], [-4.06, 108], [-2.14, 134.4],
  [0, 161.5], [0.98, 172], [1.91, 181.5], [3.06, 190], [4.35, 200.8], [10, 246], [12.38, 264], [16.13, 293], [18.2, 312],
  [19.46, 326], [20.67, 342.6], [21.75, 364], [22.58, 384], [23.1, 402], [23.62, 420], [24.3, 440], [25.4, 448], [26.1, 436],
  [26.53, 420], [26.95, 403.6], [27.36, 381.5], [27.88, 345], [28.3, 304.7], [28.51, 281], [28.92, 226], [29.63, 100], [30, 0],
  [14.15, 0], [0, 1.4],
];

const innerBorders: Point[][] = [
  [[-4.06, 108], [-4.43, 91], [-4.95, 65], [-5.58, 40], [-6, 28], [-6.47, 20.7]],
  [[4.35, 200.8], [3.99, 192], [3.64, 181.5], [3.27, 160.4], [3.1, 145.7], [2.91, 117.6], [2.79, 93], [2.64, 83.9], [2.33, 70.2], [1.6, 55], [0.77, 46.3], [0, 41.4]],
  [[3.27, 160.4], [3.68, 172], [4.35, 180.8], [5.55, 190.6], [7.2, 200], [9.1, 209], [12.38, 219.7], [15.7, 228], [19.17, 234.8]],
  [[20.67, 342.6], [20, 306], [19.67, 279], [19.36, 257], [19.17, 234.8]],
  [[17.92, 52.7], [16.55, 29.8], [15.1, 10.5], [14.15, 0]],
];

// shared edge between woodland and savanna, bottom to top
const divide: Point[] = [[17.92, 52.7], [18.16, 58], [18.38, 65], [18.63, 77.2], [18.85, 92], [19, 107], [19.06, 126]];

const woodland: Point[] = [
  [-10.19, 1.8], [-8.65, 7], [-6.47, 19.7], [-3.18, 30.2], [0, 39.7], [2.12, 46.3], [4.35, 57.6], [6.8, 72.7], [9.1, 86.7], [10, 91.3],
  [12.38, 102.5], [14.3, 110.6], [16.34, 118], ...[...divide].reverse(), [12.39, 43.5], [10, 39.7], [0, 22.8], [-5.26, 12.6],
];

const savannaForest: Point[] = [
  [19.17, 234.8], [20.9, 237.6], [22, 240.2], [23.1, 243.6], [24.1, 247], [25.08, 251.3], [26, 256.3], [26.74, 261], [27.3, 265.7],
  [27.78, 271.3], [28.2, 276.2], [28.51, 281], [28.73, 254], [28.92, 226], [29.09, 200], [29.34, 158], [29.63, 100], [29.03, 93],
  [28.45, 87.8], [27.78, 83], [26.98, 78.2], [26.12, 74], [24.35, 67], [22.58, 63], [20, 57], ...divide, [19, 145.7], [18.96, 166.7],
  [19.02, 205.3],
];

const legend = [
  { label: 'Subtropical Desert' },
  { label: 'Temperate Grassland / Desert' },
  { label: 'Woodland / Shrubland', color: '#c8a86b' },
  { label: 'Tundra' },
  { label: 'Boreal Forest' },
  { label: 'Temperate Seasonal Forest' },
  { label: 'Tropical Seasonal Forest / Savanna', color: '#8c9f5c' },
  { label: 'Temperate Rain Forest' },
  { label: 'Tropical Rain Forest' },
];

// Corner cutting that keeps both ends in place.
function soften(points: Point[]): Point[] {
  let out = points;
  for (let pass = 0; pass < 2; pass++) {
    const next: Point[] = [out[0]];
    for (let i = 1; i < out.length; i++) {
      const [ax, ay] = out[i - 1];
      const [bx, by] = out[i];
      next.push([ax * 0.75 + bx * 0.25, ay * 0.75 + by * 0.25], [ax * 0.25 + bx * 0.75, ay * 0.25 + by * 0.75]);
    }
    next.push(out[out.length - 1]);
    out = next;
  }
  return out;
}

const xOf = (t: number) => 870 + t * 44.12;
const yOf = (p: number) => 861 - p * 1.908;
const plot = (points: Point[]) => toPath(points.map(([t, p]): Point => [xOf(t), yOf(p)]));

function WhittakerChart() {
  return (
    <svg viewBox="0 0 2832 1000" className="w-full bg-white font-['Open_Sans'] text-[24px]" fill="#2a3f5f" role="img" aria-label="Whittaker biomes">
      <clipPath id="plot-area">
        <rect x="122" y="60" width="2160" height="806" />
      </clipPath>
      <g clipPath="url(#plot-area)">
        <path d={plot(envelope) + 'Z'} fill="#f6f6f6" stroke="#ececec" strokeWidth="2" />
      </g>
      <g stroke="#c8c8c8" strokeOpacity="0.5" strokeWidth="2">
        {[0, 100, 200, 300, 400].map((p) => (
          <line key={p} x1="122" x2="2282" y1={yOf(p)} y2={yOf(p)} />
        ))}
        {[-10, 0, 10, 20, 30].map((t) => (
          <line key={t} x1={xOf(t)} x2={xOf(t)} y1="60" y2="880" />
        ))}
      </g>
      <g fill="none" stroke="#dedede" strokeWidth="2">
        {innerBorders.map((line, i) => (
          <path key={i} d={plot(soften(line))} />
        ))}
      </g>
      <path d={plot(woodland) + 'Z'} fill="#c8a86b" stroke="#262624" strokeWidth="4" />
      <path d={plot(savannaForest) + 'Z'} fill="#8c9f5c" stroke="#262624" strokeWidth="4" />

      {[0, 100, 200, 300, 400].map((p) => (
        <text key={p} x="118" y={yOf(p) + 9} textAnchor="end">
          {p}
        </text>
      ))}
      {[-10, 0, 10, 20, 30].map((t) => (
        <text key={t} x={xOf(t)} y="906" textAnchor="middle">
          {String(t).replace('-', '−')}
        </text>
      ))}
      <text x="1201" y="960" textAnchor="middle" className="text-[28px]">
        Temperature (°C)
      </text>
      <text transform="translate(33 470) rotate(-90)" textAnchor="middle" className="text-[28px]">
        Precipitation (cm)
      </text>

      <rect x="2326" y="102" width="480" height="396" fill="#fff" stroke="#e2e2e2" strokeWidth="2" />
      <text x="2331" y="134" className="font-bold">
        Whittaker biomes
      </text>
      {legend.map(({ label, color }, i) => (
        <g key={label}>
          <rect x="2337" y={158 + i * 38} width="60" height="14" fill={color ?? '#f6f6f6'} />
          <rect x="2337" y={157 + i * 38} width="60" height={color ? 4 : 2} fill={color ? '#262624' : '#ececec'} />
          <text x="2407" y={172 + i * 38} className="text-[22px]">
            {label}
          </text>
        </g>
      ))}
    </svg>
  );
}

/* ---------- page ---------- */

export default function App() {
  return (
    <div className="relative min-h-screen bg-[#f9f9f9] font-['Inter',sans-serif] text-[#333]">
      <Header />

      <main>
        <div className="mx-auto max-w-[2264px] border-b-2 border-[#e9e9e9] px-20 pt-20 pb-9">
          <p className="mx-auto max-w-[2080px] text-center text-[28px] leading-[42px] font-semibold">
            Seu projeto está localizado na ecorregião Uruguayan savanna. Esta ecorregião faz parte do bioma global Tropical &amp;
            Subtropical Grasslands, Savannas &amp; Shrublands, que ajudará a filtrar as espécies adaptadas ao seu clima regional. Se você
            concorda, pule para a próxima aba (Espécies).
          </p>
        </div>

        <div className="mt-10 grid grid-cols-2 gap-12 px-[72px]">
          <div className="relative h-[1200px] overflow-hidden rounded-[20px]">
            <EcoregionMap />
            <div className="absolute top-5 left-5 flex flex-col rounded-lg border-4 border-black/20 bg-clip-padding">
              <button
                type="button"
                aria-label="Zoom in"
                className="flex size-[60px] items-center justify-center rounded-t-[4px] border-b-2 border-[#ccc] bg-white pt-2 text-black"
              >
                <svg viewBox="0 0 24 24" className="size-6" stroke="currentColor" strokeWidth="4.500">
                  <path d="M0 12H24M12 0V24" />
                </svg>
              </button>
              <button type="button" aria-label="Zoom out" className="flex size-[60px] items-center justify-center rounded-b-[4px] bg-white pt-2 text-black">
                <svg viewBox="0 0 24 24" className="size-6" stroke="currentColor" strokeWidth="4.500">
                  <path d="M0 12H24" />
                </svg>
              </button>
            </div>
            <button
              type="button"
              aria-label="Camadas"
              className="absolute top-5 right-5 flex size-24 items-center justify-center rounded-[10px] border-4 border-black/20 bg-white bg-clip-padding pt-[2px]"
            >
              <LayersIcon />
            </button>
          </div>

          <section>
            <p className="text-[26px] leading-[39px] font-light text-[#555]">
              Se o bioma não foi reconhecido corretamente, a resolução do mapa retornou outro bioma próximo a você. Para selecionar a
              ecorregião/bioma correto, verifique neste mapa qual localização próxima cairia na ecorregião correta do seu projeto, depois
              volte à aba Localização para selecionar essa localização e retorne aqui. Se o seu projeto está localizado em uma transição
              para outro bioma, você pode selecionar manualmente bioma(s) adicional(is) abaixo para ampliar a filtragem de espécies.
            </p>
            <h2 className="mt-7 text-[32px] leading-[46px] font-semibold">Bioma</h2>
            <div className="mt-[18px] flex flex-wrap gap-x-11 gap-y-4 pl-2">
              {biomes.map((biome) => (
                <button
                  key={biome}
                  type="button"
                  aria-pressed={biome === selectedBiome}
                  className={`h-[87px] rounded-full border-4 px-9 text-[26px] font-light ${
                    biome === selectedBiome ? 'border-[#6c757d] bg-[#6c757d] text-white' : 'border-[#ccc] bg-[#f5f5f5] text-[#222]'
                  }`}
                >
                  {biome}
                </button>
              ))}
            </div>
          </section>
        </div>

        <div className="mx-6 mt-20 border-t-2 border-[#dedede] pt-10">
          <p className="text-center text-[26px] leading-[40px] font-semibold text-[#555]">
            OPCIONAL: O gráfico de Whittaker abaixo pode ajudá-lo a identificar qual(is) bioma(s) adicional(is) selecionar, com base na
            precipitação anual e temperatura média.
          </p>
          <div className="mt-8">
            <WhittakerChart />
          </div>
        </div>
      </main>

      {/* action bar over the content */}
      <div className="absolute inset-x-0 top-[1319px] flex h-[131px] items-center justify-between border-t-2 border-[#e6e9ec] bg-white/[.985] px-[100px]">
        <button type="button" className="h-[81px] w-[240px] rounded-xl border-2 border-[#444] bg-white text-[30px] font-medium">
          Voltar
        </button>
        <button type="button" className="h-[81px] w-[240px] rounded-xl bg-[#048a1b] text-[30px] font-semibold text-white">
          Próximo
        </button>
      </div>
    </div>
  );
}
